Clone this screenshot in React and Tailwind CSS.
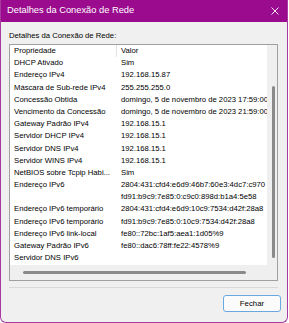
import React from "react";

const rows = [
  ["DHCP Ativado", "Sim"],
  ["Endereço IPv4", "192.168.15.87"],
  ["Máscara de Sub-rede IPv4", "255.255.255.0"],
  ["Concessão Obtida", "domingo, 5 de novembro de 2023 17:59:00"],
  ["Vencimento da Concessão", "domingo, 5 de novembro de 2023 21:59:00"],
  ["Gateway Padrão IPv4", "192.168.15.1"],
  ["Servidor DHCP IPv4", "192.168.15.1"],
  ["Servidor DNS IPv4", "192.168.15.1"],
  ["Servidor WINS IPv4", "192.168.15.1"],
  ["NetBIOS sobre Tcpip Habi...", "Sim"],
  ["Endereço IPv6", "2804:431:cfd4:e6d9:46b7:60e3:4dc7:c970"],
  ["", "fd91:b9c9:7e85:0:c9c0:898d:b1a4:5e58"],
  ["Endereço IPv6 temporário", "2804:431:cfd4:e6d9:10c9:7534:d42f:28a8"],
  ["Endereço IPv6 temporário", "fd91:b9c9:7e85:0:10c9:7534:d42f:28a8"],
  ["Endereço IPv6 link-local", "fe80::72bc:1af5:aea1:1d05%9"],
  ["Gateway Padrão IPv6", "fe80::dac6:78ff:fe22:4578%9"],
  ["Servidor DNS IPv6", ""],
];

function Row({ name, value, header }) {
  return (
    <div className="flex h-[12.2px] items-center whitespace-nowrap leading-[12.2px]">
      <div
        className={
          "w-[107px] shrink-0 pl-[4px] " +
          (header ? "border-r border-[#e3e3e3]" : "")
        }
      >
        {name}
      </div>
      <div className="pl-[4px]">{value}</div>
    </div>
  );
}

export default function App() {
  return (
    <div className="h-[323px] w-[289px] bg-white font-['Liberation_Sans',Arial,sans-serif]">
      <div className="flex h-[323px] w-[288px] flex-col overflow-hidden rounded-b-[6px] border border-t-0 border-[#a83aa1] bg-[#f0f0f0]">
        {/* title bar */}
        <div className="flex h-[22px] shrink-0 items-center justify-between bg-[#9b0b8e] pl-[6px] pr-[8px] text-[9.3px] text-white">
          <span>Detalhes da Conexão de Rede</span>
          <svg width="8" height="8" viewBox="0 0 8 8">
            <path d="M0.5 0.5L7.5 7.5M7.5 0.5L0.5 7.5" stroke="white" strokeWidth="0.9" />
          </svg>
        </div>

        <div className="flex flex-1 flex-col pl-[8px] pr-[9px] text-[7.7px] text-black">
          <div className="mt-[9px] leading-[10px]">Detalhes da Conexão de Rede:</div>

          {/* list box */}
          <div className="mt-[3px] grid h-[237px] grid-cols-[1fr_10px] grid-rows-[1fr_15px] border border-[#a0a0a0] bg-white">
            <div className="overflow-hidden">
              <Row name="Propriedade" value="Valor" header />
              {rows.map((r, i) => (
                <Row key={i} name={r[0]} value={r[1]} />
              ))}
            </div>
            <div className="flex flex-col bg-[#efefef] pt-[41px]">
              <div className="ml-[5px] h-[172px] w-[3px] rounded-full bg-[#8a8a8a]" />
            </div>
            <div className="flex items-center bg-[#efefef] pl-[13px]">
              <div className="h-[3px] w-[223px] rounded-full bg-[#8a8a8a]" />
            </div>
            <div className="bg-[#efefef]" />
          </div>

          <div className="mt-[6px] h-[1px] bg-[#d9d9d9]" />

          <div className="mt-[7px] flex justify-end">
            <button className="-mr-[3px] flex h-[17px] w-[58px] items-center justify-center rounded-[3px] border border-[#6aa9e0] bg-[#fbfbfb] text-[7.8px] text-black">
              Fechar
            </button>
          </div>
        </div>
      </div>
    </div>
  );
}
